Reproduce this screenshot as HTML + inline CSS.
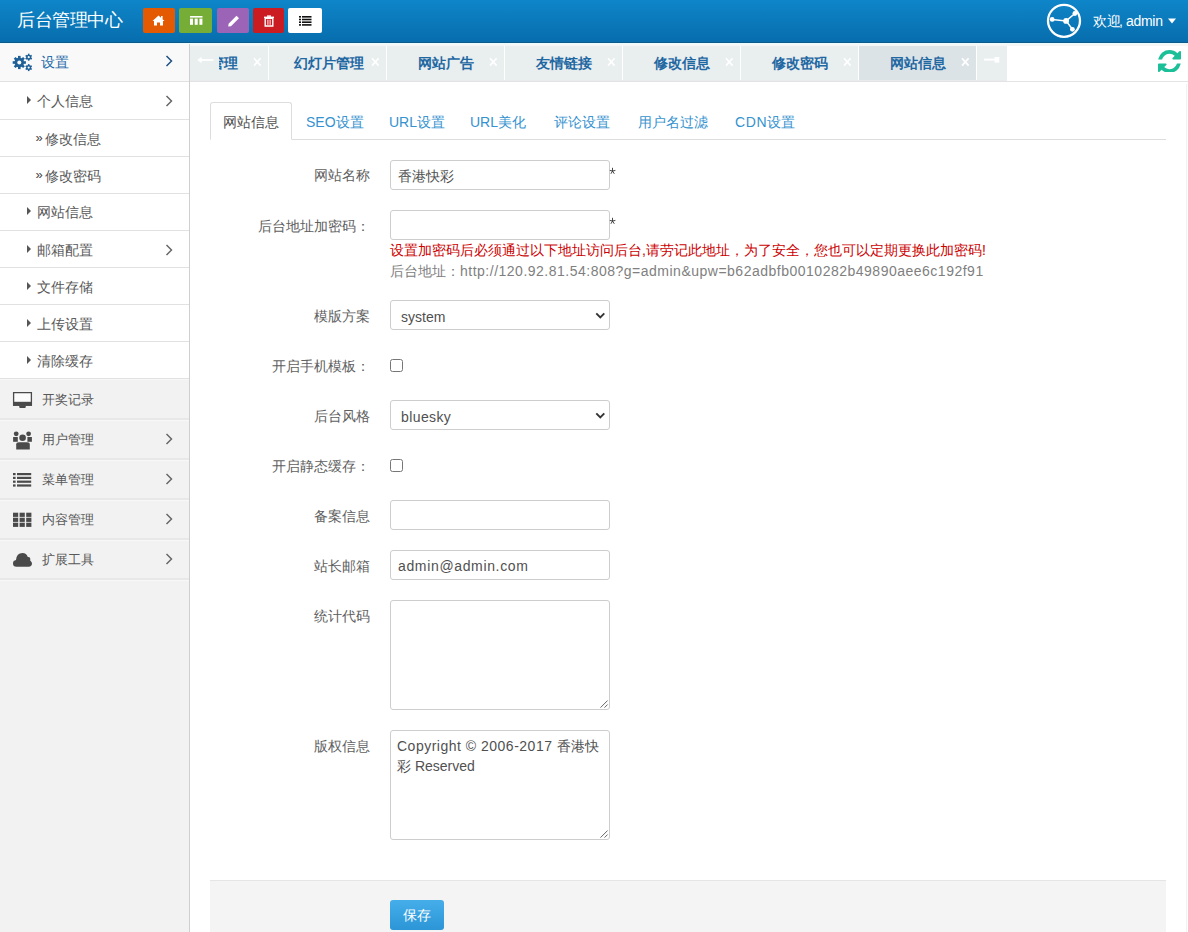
<!DOCTYPE html>
<html><head><meta charset="utf-8">
<style>
*{box-sizing:border-box;margin:0;padding:0}
html,body{width:1188px;height:932px;overflow:hidden;background:#fff;font-family:"Liberation Sans",sans-serif;font-size:14px;color:#555}
.abs{position:absolute}
.t{position:absolute;white-space:nowrap;line-height:20px}
#hdr{position:absolute;z-index:5;left:0;top:0;width:1188px;height:43px;background:linear-gradient(#0e86c9,#076dad);border-bottom:1px solid #0b5a8a}
.hb{position:absolute;top:8px;height:25px;border-radius:2px}
#side{position:absolute;left:0;top:0;width:190px;height:932px;background:#f2f2f2;border-right:1px solid #cfcfcf}
.ln{position:absolute;left:0;width:189px;height:1px}
.tb{position:absolute;top:43px;height:38px;width:117px;background:#e9eeef}
.tt{position:absolute;white-space:nowrap;line-height:20px;color:#1f68a2;font-weight:bold}
.tx{position:absolute;top:52px;line-height:20px;color:#fff;font-size:13px}
.lbl{position:absolute;right:818px;white-space:nowrap;color:#606060;line-height:20px}
.inp{position:absolute;left:390px;width:220px;height:29px;border:1px solid #cdcdcd;border-radius:3px;background:#fff}
.star{position:absolute;left:610px;color:#555;font-size:13px;line-height:16px}
.cb{position:absolute;left:390px;width:13px;height:13px;border:1px solid #767676;border-radius:2.5px;background:#fff}
.nv{position:absolute;top:112px;line-height:20px;color:#3592cf;white-space:nowrap}
</style></head><body>
<div id="hdr">
<div class="t" style="left:17px;top:8px;font-size:18px;line-height:24px;letter-spacing:-0.5px;color:#fff">后台管理中心</div>
<div class="hb" style="left:143px;width:32px;background:#e45a02"></div>
<svg class="abs" style="left:152px;top:15px" width="13" height="11" viewBox="0 0 13 11"><path d="M6.5 0.5 L12.5 6 L11 6 L11 10.5 L8 10.5 L8 7.5 L5 7.5 L5 10.5 L2 10.5 L2 6 L0.5 6 Z" fill="#fff"/><rect x="9" y="1" width="1.6" height="3" fill="#fff"/></svg>
<div class="hb" style="left:179px;width:33px;background:#76ad37"></div>
<svg class="abs" style="left:190px;top:16px" width="13" height="9" viewBox="0 0 13 9"><rect x="0" y="0" width="12.5" height="1.6" fill="#fff"/><rect x="0" y="2.6" width="3" height="6.2" fill="#fff"/><rect x="4.7" y="2.6" width="3" height="6.2" fill="#fff"/><rect x="9.4" y="2.6" width="3" height="6.2" fill="#fff"/></svg>
<div class="hb" style="left:217px;width:32px;background:#9b64b6"></div>
<svg class="abs" style="left:227px;top:15px" width="13" height="12" viewBox="0 0 13 12"><path d="M9.5 0.8 L12 3.3 L4 11.2 L1.2 11.6 L1.6 8.8 Z" fill="#fff"/></svg>
<div class="hb" style="left:253px;width:31px;background:#cb1c22"></div>
<svg class="abs" style="left:263px;top:15px" width="12" height="12" viewBox="0 0 12 12"><rect x="1" y="1.6" width="10" height="1.4" fill="#fff"/><rect x="4" y="0.4" width="4" height="1.4" fill="#fff"/><path d="M2.2 3.4 H9.8 V11 H2.2 Z" fill="none" stroke="#fff" stroke-width="1.4"/><rect x="4.4" y="4.6" width="1" height="5.2" fill="#fff"/><rect x="6.6" y="4.6" width="1" height="5.2" fill="#fff"/></svg>
<div class="hb" style="left:288px;width:34px;background:#fff"></div>
<svg class="abs" style="left:299px;top:16px" width="13" height="10" viewBox="0 0 13 10"><g fill="#111"><rect x="0" y="0" width="2" height="1.6"/><rect x="3" y="0" width="9.5" height="1.6"/><rect x="0" y="2.7" width="2" height="1.6"/><rect x="3" y="2.7" width="9.5" height="1.6"/><rect x="0" y="5.4" width="2" height="1.6"/><rect x="3" y="5.4" width="9.5" height="1.6"/><rect x="0" y="8.1" width="2" height="1.6"/><rect x="3" y="8.1" width="9.5" height="1.6"/></g></svg>
<svg class="abs" style="left:1045px;top:2px" width="38" height="38" viewBox="1045 2 38 38"><circle cx="1064" cy="20.8" r="16" fill="none" stroke="#fff" stroke-width="2.3"/><path d="M1052.2 19.4 L1066.1 20.9 L1074.9 13.5 M1066.1 20.9 L1072.4 29.3" stroke="#fff" stroke-width="1.5" fill="none"/><circle cx="1052.2" cy="19.4" r="2.4" fill="#fff"/><circle cx="1066.1" cy="20.9" r="2.9" fill="#fff"/><circle cx="1074.9" cy="13.5" r="2.4" fill="#fff"/><circle cx="1072.4" cy="29.3" r="2.4" fill="#fff"/></svg>
<div class="t" style="left:1093px;top:11px;color:#fff">欢迎</div>
<div class="t" style="left:1119px;top:11px;color:#fff">,</div>
<div class="t" style="left:1126px;top:11px;color:#fff;letter-spacing:-0.3px">admin</div>
<svg class="abs" style="left:1168px;top:18px" width="9" height="6" viewBox="0 0 9 6"><path d="M0 0.5 H8 L4 5.5Z" fill="#fff"/></svg>
</div>
<div id="side">
<div class="abs" style="left:0;top:43px;width:189px;height:38px;background:#f9f9f9"></div>
<div class="abs" style="left:0;top:82px;width:189px;height:296px;background:#fff"></div>
<div class="ln" style="top:81px;background:#e1e1e1"></div>
<div class="ln" style="top:119px;background:#e1e1e1"></div>
<div class="ln" style="top:156px;background:#e1e1e1"></div>
<div class="ln" style="top:193px;background:#e1e1e1"></div>
<div class="ln" style="top:230px;background:#e1e1e1"></div>
<div class="ln" style="top:267px;background:#e1e1e1"></div>
<div class="ln" style="top:304px;background:#e1e1e1"></div>
<div class="ln" style="top:341px;background:#e1e1e1"></div>
<div class="ln" style="top:378px;background:#e1e1e1"></div>
<div class="ln" style="top:379px;background:#f8f8f8"></div>
<div class="ln" style="top:418px;height:2px;background:#e8e8e8"></div>
<div class="ln" style="top:420px;background:#f8f8f8"></div>
<div class="ln" style="top:458px;height:2px;background:#e8e8e8"></div>
<div class="ln" style="top:460px;background:#f8f8f8"></div>
<div class="ln" style="top:498px;height:2px;background:#e8e8e8"></div>
<div class="ln" style="top:500px;background:#f8f8f8"></div>
<div class="ln" style="top:538px;height:2px;background:#e8e8e8"></div>
<div class="ln" style="top:540px;background:#f8f8f8"></div>
<div class="ln" style="top:578px;height:2px;background:#e8e8e8"></div>
<div class="ln" style="top:580px;background:#f8f8f8"></div>
</div>
<div class="t" style="left:41px;top:52px;color:#1f6aa8">设置</div>
<svg class="abs" style="left:10px;top:50px" width="26" height="24" viewBox="10 50 26 24"><g fill="#1d5f96"><rect x="18.00" y="55.90" width="2.60" height="2.60" transform="rotate(0.0 19.3 62.5)"/><rect x="18.00" y="55.90" width="2.60" height="2.60" transform="rotate(45.0 19.3 62.5)"/><rect x="18.00" y="55.90" width="2.60" height="2.60" transform="rotate(90.0 19.3 62.5)"/><rect x="18.00" y="55.90" width="2.60" height="2.60" transform="rotate(135.0 19.3 62.5)"/><rect x="18.00" y="55.90" width="2.60" height="2.60" transform="rotate(180.0 19.3 62.5)"/><rect x="18.00" y="55.90" width="2.60" height="2.60" transform="rotate(225.0 19.3 62.5)"/><rect x="18.00" y="55.90" width="2.60" height="2.60" transform="rotate(270.0 19.3 62.5)"/><rect x="18.00" y="55.90" width="2.60" height="2.60" transform="rotate(315.0 19.3 62.5)"/><circle cx="19.3" cy="62.5" r="4.8"/></g><circle cx="19.3" cy="62.5" r="2.0" fill="#f9f9f9"/><g fill="#1d5f96"><rect x="27.90" y="53.70" width="1.60" height="1.80" transform="rotate(0.0 28.7 57.2)"/><rect x="27.90" y="53.70" width="1.60" height="1.80" transform="rotate(60.0 28.7 57.2)"/><rect x="27.90" y="53.70" width="1.60" height="1.80" transform="rotate(120.0 28.7 57.2)"/><rect x="27.90" y="53.70" width="1.60" height="1.80" transform="rotate(180.0 28.7 57.2)"/><rect x="27.90" y="53.70" width="1.60" height="1.80" transform="rotate(240.0 28.7 57.2)"/><rect x="27.90" y="53.70" width="1.60" height="1.80" transform="rotate(300.0 28.7 57.2)"/><circle cx="28.7" cy="57.2" r="2.5"/></g><circle cx="28.7" cy="57.2" r="1.1" fill="#f9f9f9"/><g fill="#1d5f96"><rect x="27.90" y="64.10" width="1.60" height="1.80" transform="rotate(0.0 28.7 67.6)"/><rect x="27.90" y="64.10" width="1.60" height="1.80" transform="rotate(60.0 28.7 67.6)"/><rect x="27.90" y="64.10" width="1.60" height="1.80" transform="rotate(120.0 28.7 67.6)"/><rect x="27.90" y="64.10" width="1.60" height="1.80" transform="rotate(180.0 28.7 67.6)"/><rect x="27.90" y="64.10" width="1.60" height="1.80" transform="rotate(240.0 28.7 67.6)"/><rect x="27.90" y="64.10" width="1.60" height="1.80" transform="rotate(300.0 28.7 67.6)"/><circle cx="28.7" cy="67.6" r="2.5"/></g><circle cx="28.7" cy="67.6" r="1.1" fill="#f9f9f9"/></svg>
<svg class="abs" style="left:165px;top:55px" width="9" height="12" viewBox="0 0 9 12"><path d="M1.5 1 L6.5 6 L1.5 11" fill="none" stroke="#1e4f80" stroke-width="1.45"/></svg>
<svg class="abs" style="left:27px;top:96px" width="5" height="8" viewBox="0 0 5 8"><path d="M0 0 L4 4 L0 8Z" fill="#555"/></svg>
<div class="t" style="left:37px;top:91px;color:#585858">个人信息</div>
<svg class="abs" style="left:165px;top:95px" width="9" height="12" viewBox="0 0 9 12"><path d="M1.5 1 L6.5 6 L1.5 11" fill="none" stroke="#666" stroke-width="1.45"/></svg>
<div class="t" style="left:35.5px;top:127.5px;color:#444;font-size:13px">»</div>
<div class="t" style="left:45px;top:129px;color:#585858">修改信息</div>
<div class="t" style="left:35.5px;top:164.5px;color:#444;font-size:13px">»</div>
<div class="t" style="left:45px;top:166px;color:#585858">修改密码</div>
<svg class="abs" style="left:27px;top:207px" width="5" height="8" viewBox="0 0 5 8"><path d="M0 0 L4 4 L0 8Z" fill="#555"/></svg>
<div class="t" style="left:37px;top:202px;color:#585858">网站信息</div>
<svg class="abs" style="left:27px;top:245px" width="5" height="8" viewBox="0 0 5 8"><path d="M0 0 L4 4 L0 8Z" fill="#555"/></svg>
<div class="t" style="left:37px;top:240px;color:#585858">邮箱配置</div>
<svg class="abs" style="left:165px;top:244px" width="9" height="12" viewBox="0 0 9 12"><path d="M1.5 1 L6.5 6 L1.5 11" fill="none" stroke="#666" stroke-width="1.45"/></svg>
<svg class="abs" style="left:27px;top:282px" width="5" height="8" viewBox="0 0 5 8"><path d="M0 0 L4 4 L0 8Z" fill="#555"/></svg>
<div class="t" style="left:37px;top:277px;color:#585858">文件存储</div>
<svg class="abs" style="left:27px;top:319px" width="5" height="8" viewBox="0 0 5 8"><path d="M0 0 L4 4 L0 8Z" fill="#555"/></svg>
<div class="t" style="left:37px;top:314px;color:#585858">上传设置</div>
<svg class="abs" style="left:27px;top:356px" width="5" height="8" viewBox="0 0 5 8"><path d="M0 0 L4 4 L0 8Z" fill="#555"/></svg>
<div class="t" style="left:37px;top:351px;color:#585858">清除缓存</div>
<div class="t" style="left:41.5px;top:389.5px;color:#585858;font-size:13px">开奖记录</div>
<div class="t" style="left:41.5px;top:429.5px;color:#585858;font-size:13px">用户管理</div>
<svg class="abs" style="left:165px;top:433px" width="9" height="12" viewBox="0 0 9 12"><path d="M1.5 1 L6.5 6 L1.5 11" fill="none" stroke="#666" stroke-width="1.45"/></svg>
<div class="t" style="left:41.5px;top:469.5px;color:#585858;font-size:13px">菜单管理</div>
<svg class="abs" style="left:165px;top:473px" width="9" height="12" viewBox="0 0 9 12"><path d="M1.5 1 L6.5 6 L1.5 11" fill="none" stroke="#666" stroke-width="1.45"/></svg>
<div class="t" style="left:41.5px;top:509.5px;color:#585858;font-size:13px">内容管理</div>
<svg class="abs" style="left:165px;top:513px" width="9" height="12" viewBox="0 0 9 12"><path d="M1.5 1 L6.5 6 L1.5 11" fill="none" stroke="#666" stroke-width="1.45"/></svg>
<div class="t" style="left:41.5px;top:549.5px;color:#585858;font-size:13px">扩展工具</div>
<svg class="abs" style="left:165px;top:553px" width="9" height="12" viewBox="0 0 9 12"><path d="M1.5 1 L6.5 6 L1.5 11" fill="none" stroke="#666" stroke-width="1.45"/></svg>
<svg class="abs" style="left:12px;top:390px" width="22" height="20" viewBox="12 390 22 20"><path d="M13.6 392.6 H31.4 V405.2 H13.6 Z" fill="#fbfbfb" stroke="#4a4a4a" stroke-width="1.3"/><rect x="13" y="401.8" width="19" height="4" fill="#4a4a4a"/><path d="M19 405.6 H26 L25.4 407.9 H19.6Z" fill="#4a4a4a"/></svg>
<svg class="abs" style="left:12px;top:430px" width="22" height="22" viewBox="12 430 22 22"><g fill="#4a4a4a"><circle cx="16.2" cy="433.8" r="2.4"/><circle cx="28.6" cy="433.8" r="2.4"/><path d="M13.1 437 H17.8 V441.8 H13.1Z"/><path d="M27.4 437 H31.9 V441.8 H27.4Z"/><circle cx="22.6" cy="437.8" r="3.3"/><path d="M16.2 444.5 Q16.2 442.2 19 442.2 H27 Q29.8 442.2 29.8 444.5 V449.6 H16.2Z"/></g></svg>
<svg class="abs" style="left:12px;top:470px" width="22" height="20" viewBox="12 470 22 20"><g fill="#4a4a4a"><rect x="13" y="473" width="2.6" height="2.2"/><rect x="17" y="473" width="14.2" height="2.2"/><rect x="13" y="476.8" width="2.6" height="2.2"/><rect x="17" y="476.8" width="14.2" height="2.2"/><rect x="13" y="480.6" width="2.6" height="2.2"/><rect x="17" y="480.6" width="14.2" height="2.2"/><rect x="13" y="484.4" width="2.6" height="2.2"/><rect x="17" y="484.4" width="14.2" height="2.2"/></g></svg>
<svg class="abs" style="left:12px;top:510px" width="22" height="20" viewBox="12 510 22 20"><g fill="#4a4a4a"><rect x="13.0" y="512.7" width="5.2" height="4.2"/><rect x="13.0" y="517.7" width="5.2" height="4.2"/><rect x="13.0" y="522.7" width="5.2" height="4.2"/><rect x="19.6" y="512.7" width="5.2" height="4.2"/><rect x="19.6" y="517.7" width="5.2" height="4.2"/><rect x="19.6" y="522.7" width="5.2" height="4.2"/><rect x="26.2" y="512.7" width="5.2" height="4.2"/><rect x="26.2" y="517.7" width="5.2" height="4.2"/><rect x="26.2" y="522.7" width="5.2" height="4.2"/></g></svg>
<svg class="abs" style="left:12px;top:550px" width="22" height="20" viewBox="12 550 22 20"><path d="M16.5 566.7 Q13 566.7 13 563.4 Q13 560.6 16 560.1 Q16.5 553 22.5 553 Q26.5 553 27.8 557 Q29 556.6 29.8 557.6 Q30.6 558.8 30.2 560.4 Q32 561.6 32 563.6 Q32 566.7 28.6 566.7 Z" fill="#4a4a4a"/></svg>
<div class="abs" style="left:0;top:43px;width:1188px;height:1px;background:#eafcff"></div>
<div class="abs" style="left:190px;top:44px;width:998px;height:2px;background:#f5f7f7"></div>
<div class="abs" style="left:190px;top:80px;width:817px;height:1px;background:#e9ebec"></div>
<div class="abs" style="left:190px;top:81px;width:998px;height:1px;background:#e3e3e3"></div>
<div class="abs" style="left:190px;top:46px;width:817px;height:34px;overflow:hidden">
<div class="abs" style="left:-39px;top:0;width:117px;height:34px;background:#e9eeef"></div>
<div class="tt" style="left:-8px;top:7px">菜单管理</div>
<svg class="abs" style="left:62.5px;top:11px" width="9" height="10" viewBox="0 0 9 10"><path d="M1 1.2 L7.6 8.6 M7.6 1.2 L1 8.6" stroke="#fff" stroke-width="1.7"/></svg>
<div class="abs" style="left:79px;top:0;width:117px;height:34px;background:#e9eeef"></div>
<div class="tt" style="left:104px;top:7px">幻灯片管理</div>
<svg class="abs" style="left:180.5px;top:11px" width="9" height="10" viewBox="0 0 9 10"><path d="M1 1.2 L7.6 8.6 M7.6 1.2 L1 8.6" stroke="#fff" stroke-width="1.7"/></svg>
<div class="abs" style="left:197px;top:0;width:117px;height:34px;background:#e9eeef"></div>
<div class="tt" style="left:228px;top:7px">网站广告</div>
<svg class="abs" style="left:298.5px;top:11px" width="9" height="10" viewBox="0 0 9 10"><path d="M1 1.2 L7.6 8.6 M7.6 1.2 L1 8.6" stroke="#fff" stroke-width="1.7"/></svg>
<div class="abs" style="left:315px;top:0;width:117px;height:34px;background:#e9eeef"></div>
<div class="tt" style="left:346px;top:7px">友情链接</div>
<svg class="abs" style="left:416.5px;top:11px" width="9" height="10" viewBox="0 0 9 10"><path d="M1 1.2 L7.6 8.6 M7.6 1.2 L1 8.6" stroke="#fff" stroke-width="1.7"/></svg>
<div class="abs" style="left:433px;top:0;width:117px;height:34px;background:#e9eeef"></div>
<div class="tt" style="left:464px;top:7px">修改信息</div>
<svg class="abs" style="left:534.5px;top:11px" width="9" height="10" viewBox="0 0 9 10"><path d="M1 1.2 L7.6 8.6 M7.6 1.2 L1 8.6" stroke="#fff" stroke-width="1.7"/></svg>
<div class="abs" style="left:551px;top:0;width:117px;height:34px;background:#e9eeef"></div>
<div class="tt" style="left:582px;top:7px">修改密码</div>
<svg class="abs" style="left:652.5px;top:11px" width="9" height="10" viewBox="0 0 9 10"><path d="M1 1.2 L7.6 8.6 M7.6 1.2 L1 8.6" stroke="#fff" stroke-width="1.7"/></svg>
<div class="abs" style="left:669px;top:0;width:117px;height:34px;background:#dce3e7"></div>
<div class="tt" style="left:700px;top:7px">网站信息</div>
<svg class="abs" style="left:770.5px;top:11px" width="9" height="10" viewBox="0 0 9 10"><path d="M1 1.2 L7.6 8.6 M7.6 1.2 L1 8.6" stroke="#fff" stroke-width="1.7"/></svg>
<div class="abs" style="left:0;top:0;width:29px;height:34px;background:#e9eeef"></div>
<svg class="abs" style="left:6px;top:9px" width="18" height="10" viewBox="0 0 18 10"><path d="M4.5 5 H17.5" stroke="#fff" stroke-width="1.8"/><path d="M1.2 5 L5.6 1.8 V8.2Z" fill="#fff"/></svg>
<div class="abs" style="left:787px;top:0;width:30px;height:34px;background:#e9eeef"></div>
<svg class="abs" style="left:793px;top:9px" width="18" height="10" viewBox="0 0 18 10"><path d="M1 4.6 H12" stroke="#fff" stroke-width="2"/><path d="M11.5 2 H16.3 V7.6 H11.5Z" fill="#fff"/></svg>
</div>
<svg class="abs" style="left:1158px;top:49px" width="23" height="23" viewBox="0 0 1536 1536"><g transform="translate(0,64) scale(1)"><path fill="#1bbf98" d="M1511 928q0 5-1 7-64 268-268 434.5t-478 166.5q-146 0-282.5-55t-243.5-157l-129 129q-19 19-45 19t-45-19-19-45v-448q0-26 19-45t45-19h448q26 0 45 19t19 45-19 45l-137 137q71 66 161 102t187 36q134 0 250-65t186-179q11-17 53-117 8-23 30-23h192q13 0 22.5 9.5t9.5 22.5zm25-800v448q0 26-19 45t-45 19h-448q-26 0-45-19t-19-45 19-45l138-138q-148-137-349-137-134 0-250 65t-186 179q-11 17-53 117-8 23-30 23h-199q-13 0-22.5-9.5t-9.5-22.5v-7q65-268 270-434.5t480-166.5q146 0 284 55.5t245 156.5l130-129q19-19 45-19t45 19 19 45z"/></g></svg>
<div class="abs" style="left:210px;top:139px;width:956px;height:1px;background:#ddd"></div>
<div class="abs" style="left:210px;top:102px;width:82px;height:38px;border:1px solid #ddd;border-bottom-color:#fff;border-radius:3px 3px 0 0;background:#fff"></div>
<div class="t" style="left:223px;top:112px;color:#505050">网站信息</div>
<div class="nv" style="left:306px">SEO设置</div>
<div class="nv" style="left:389px">URL设置</div>
<div class="nv" style="left:470px">URL美化</div>
<div class="nv" style="left:554px">评论设置</div>
<div class="nv" style="left:638px">用户名过滤</div>
<div class="nv" style="left:735px"><span style="letter-spacing:0.7px">CDN</span>设置</div>
<div class="lbl" style="top:165px">网站名称</div>
<div class="inp" style="top:160px;height:30px"></div>
<div class="t" style="left:398px;top:166px;color:#505050">香港快彩</div>
<svg class="abs" style="left:609px;top:167px" width="8" height="8" viewBox="0 0 8 8"><path d="M3.5 4 V0.8 M3.5 4 L0.8 3.4 M3.5 4 L6.4 3.4 M3.5 4 L1.9 6.8 M3.5 4 L5.3 6.8" stroke="#333" stroke-width="0.9"/></svg>
<div class="lbl" style="top:216px">后台地址加密码：</div>
<div class="inp" style="top:210px;height:30px"></div>
<svg class="abs" style="left:609px;top:217px" width="8" height="8" viewBox="0 0 8 8"><path d="M3.5 4 V0.8 M3.5 4 L0.8 3.4 M3.5 4 L6.4 3.4 M3.5 4 L1.9 6.8 M3.5 4 L5.3 6.8" stroke="#333" stroke-width="0.9"/></svg>
<div class="t" style="left:390px;top:240px;color:#c00">设置加密码后必须通过以下地址访问后台,请劳记此地址，为了安全，您也可以定期更换此加密码!</div>
<div class="t" style="left:390px;top:261px;color:#808080">后台地址：<span style="letter-spacing:0.5px">http://120.92.81.54:808?g=admin&amp;upw=b62adbfb0010282b49890aee6c192f91</span></div>
<div class="lbl" style="top:306px">模版方案</div>
<div class="inp" style="top:300px;height:30px"></div>
<svg class="abs" style="left:595px;top:312px" width="11" height="7" viewBox="0 0 11 7"><path d="M1.3 1.3 L5.3 5.3 L9.3 1.3" fill="none" stroke="#333" stroke-width="1.9"/></svg>
<div class="t" style="left:401px;top:307px;color:#505050">system</div>
<div class="lbl" style="top:356px">开启手机模板：</div>
<div class="cb" style="top:359px"></div>
<div class="lbl" style="top:406px">后台风格</div>
<div class="inp" style="top:400px;height:30px"></div>
<svg class="abs" style="left:595px;top:412px" width="11" height="7" viewBox="0 0 11 7"><path d="M1.3 1.3 L5.3 5.3 L9.3 1.3" fill="none" stroke="#333" stroke-width="1.9"/></svg>
<div class="t" style="left:401px;top:407px;color:#505050;letter-spacing:0.4px">bluesky</div>
<div class="lbl" style="top:456px">开启静态缓存：</div>
<div class="cb" style="top:459px"></div>
<div class="lbl" style="top:506px">备案信息</div>
<div class="inp" style="top:500px;height:30px"></div>
<div class="lbl" style="top:556px">站长邮箱</div>
<div class="inp" style="top:550px;height:30px"></div>
<div class="t" style="left:398px;top:556px;color:#505050;letter-spacing:0.65px">admin@admin.com</div>
<div class="lbl" style="top:606px">统计代码</div>
<div class="inp" style="top:600px;height:110px"></div>
<svg class="abs" style="left:598px;top:698px" width="12" height="12" viewBox="0 0 12 12"><path d="M2.5 9.6 L9.6 2.5 M6.5 9.6 L9.6 6.5" stroke="#666" stroke-width="1"/></svg>
<div class="lbl" style="top:736px">版权信息</div>
<div class="inp" style="top:730px;height:110px"></div>
<svg class="abs" style="left:598px;top:828px" width="12" height="12" viewBox="0 0 12 12"><path d="M2.5 9.6 L9.6 2.5 M6.5 9.6 L9.6 6.5" stroke="#666" stroke-width="1"/></svg>
<div class="t" style="left:397px;top:736px;color:#505050"><span style="letter-spacing:0.5px">Copyright © 2006-2017 </span>香港快</div>
<div class="t" style="left:397px;top:756px;color:#505050">彩 Reserved</div>
<div class="abs" style="left:210px;top:880px;width:956px;height:52px;background:#f4f4f4;border-top:1px solid #e5e5e5"></div>
<div class="abs" style="left:390px;top:900px;width:54px;height:30px;border-radius:3px;background:linear-gradient(#45aeea,#2b95d6)"></div>
<div class="t" style="left:403px;top:905px;color:#fff">保存</div>
<div class="abs" style="left:1186px;top:84px;width:1px;height:848px;background:#f2f2f2"></div>
</body></html>
